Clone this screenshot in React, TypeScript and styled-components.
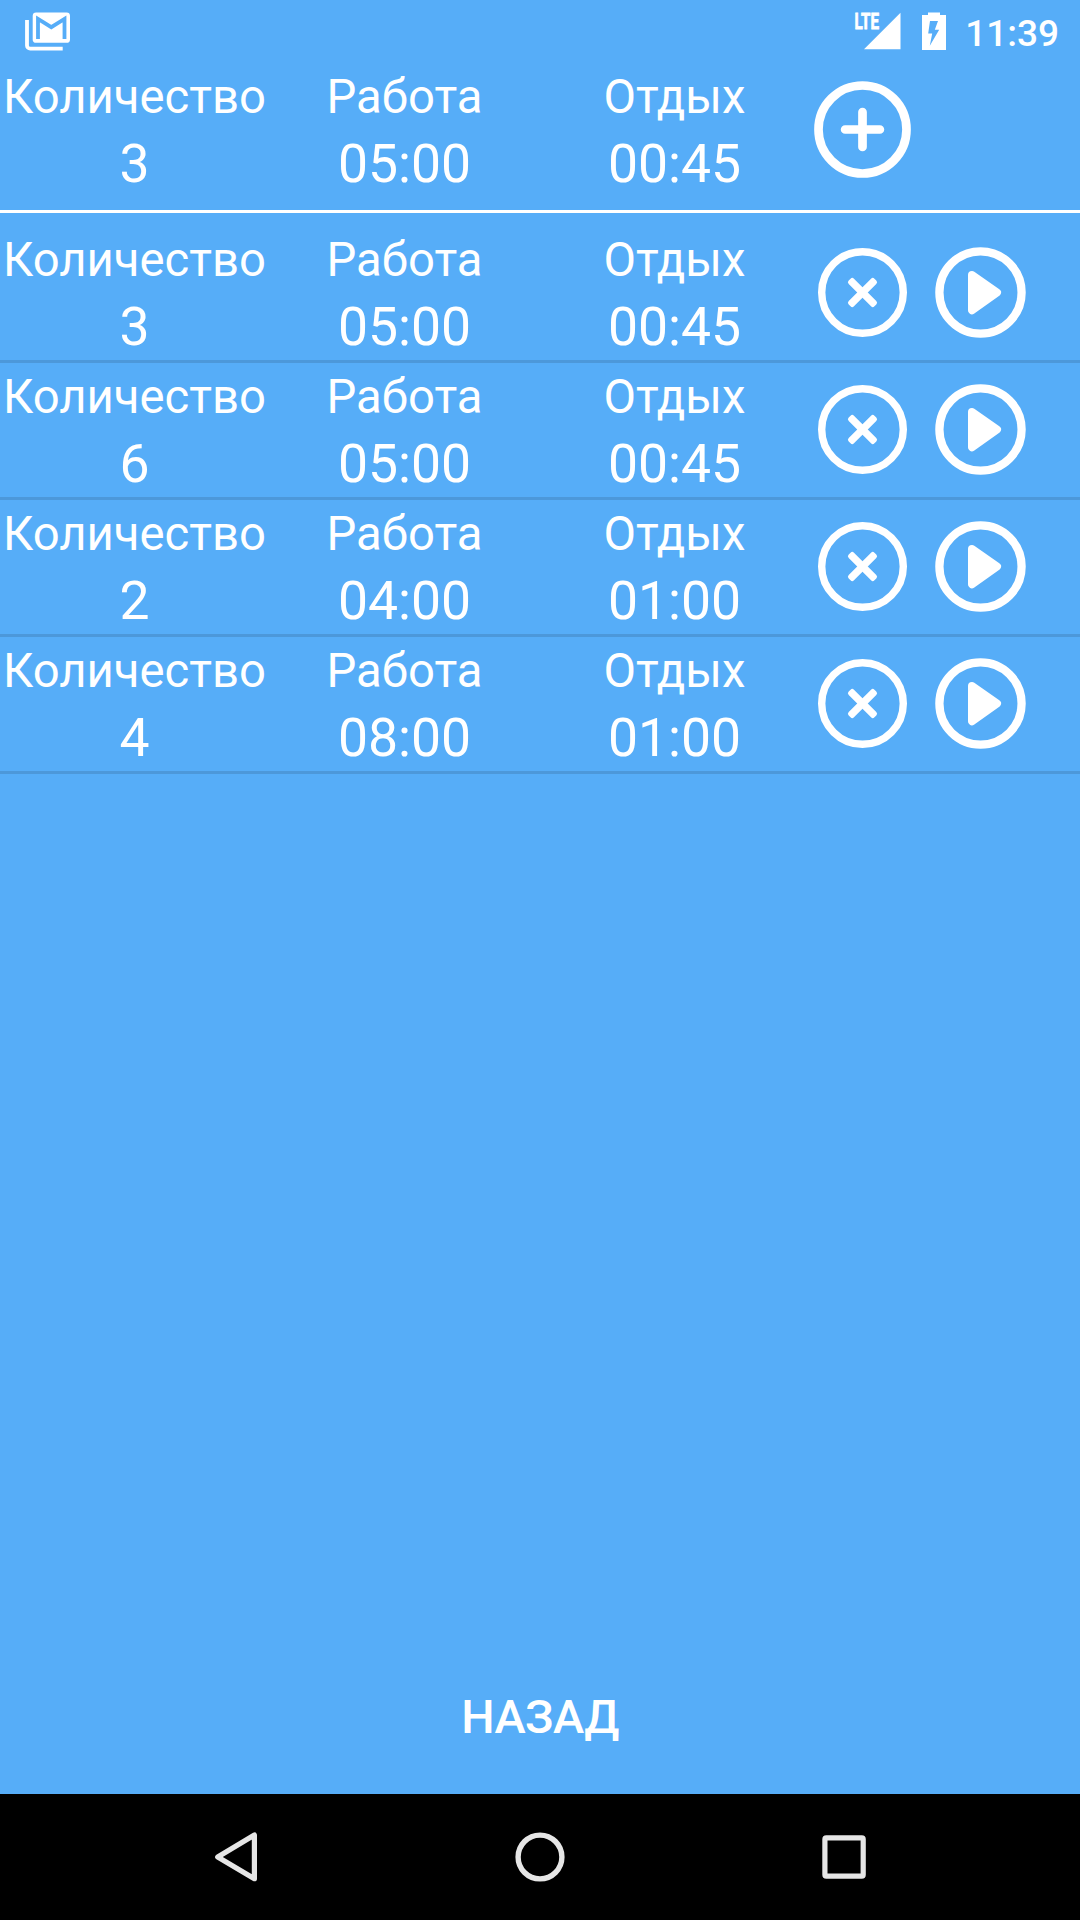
import React from "react";
import styled, { createGlobalStyle } from "styled-components";

const GlobalStyle = createGlobalStyle`
  * { box-sizing: border-box; }
  html, body { margin: 0; padding: 0; background: #56adf8; }
`;

const Screen = styled.div`
  display: flex;
  flex-direction: column;
  width: 1080px;
  height: 1920px;
  overflow: hidden;
  background: #56adf8;
  color: #fff;
  font-family: Roboto, "Noto Sans", sans-serif;
`;

const StatusBar = styled.header`
  display: flex;
  align-items: center;
  justify-content: space-between;
  flex: none;
  height: 63px;
  padding: 0 21px 0 24px;
`;

const StatusGroup = styled.div`
  display: flex;
  align-items: center;
  height: 63px;
`;

const StatusIcon = styled.svg<{ $gap?: number }>`
  display: block;
  flex: none;
  margin-right: ${(p) => p.$gap ?? 0}px;
`;

const Clock = styled.time`
  font-size: 37px;
  font-weight: 500;
  line-height: 43px;
  margin-top: 3px;
`;

const Row = styled.div`
  display: grid;
  grid-template-columns: repeat(4, 270px);
  height: 134px;
  flex: none;
`;

const Cell = styled.div`
  display: flex;
  flex-direction: column;
  align-items: center;
  padding-right: 1px;
  white-space: nowrap;
`;

const Label = styled.span`
  font-size: 47.25px;
  line-height: 56px;
  padding-top: 6px;
`;

const Value = styled.span`
  font-size: 53.5px;
  line-height: 64px;
  padding-top: 7px;
`;

const Actions = styled.div`
  display: flex;
  gap: 13px;
  align-items: center;
`;

const IconButton = styled.button`
  display: block;
  width: 105px;
  height: 105px;
  padding: 0;
  border: 0;
  background: none;
  color: inherit;
  svg { display: block; }
`;

const Composer = styled.section`
  flex: none;
  padding-bottom: 13px;
  border-bottom: 3px solid #fff;
`;

const List = styled.main`
  flex: 1;
  padding-top: 13px;
`;

const Item = styled.div`
  border-bottom: 3px solid #4c98da;
`;

const BackButton = styled.button`
  align-self: center;
  flex: none;
  height: 126px;
  margin-bottom: 14px;
  padding: 0 40px;
  border: 0;
  background: none;
  color: inherit;
  font: 500 47px/56px Roboto, "Noto Sans", sans-serif;
  letter-spacing: -0.5px;
`;

const NavBar = styled.nav`
  flex: none;
  display: flex;
  justify-content: center;
  align-items: center;
  gap: 198px;
  height: 126px;
  background: #000;
`;

const PlusIcon = () => (
  <svg width="105" height="105" viewBox="0 0 105 105" fill="none" stroke="currentColor">
    <circle cx="52.5" cy="51.5" r="44" strokeWidth="8.7" />
    <path d="M52.5 34.1v34.8M35.1 51.5h34.8" strokeWidth="8.7" strokeLinecap="round" />
  </svg>
);

const RemoveIcon = () => (
  <svg width="105" height="105" viewBox="0 0 105 105" fill="none" stroke="currentColor">
    <circle cx="52.5" cy="51.5" r="40.8" strokeWidth="7.4" />
    <g fill="currentColor" stroke="none" transform="rotate(45 52.5 51.5)">
      <rect x="48.8" y="33.3" width="7.4" height="36.4" rx="2.4" />
      <rect x="34.3" y="47.8" width="36.4" height="7.4" rx="2.4" />
    </g>
  </svg>
);

const PlayIcon = () => (
  <svg width="105" height="105" viewBox="0 0 105 105" fill="none" stroke="currentColor">
    <circle cx="52.5" cy="51.5" r="41.1" strokeWidth="8.3" />
    <path d="M44 33.9L69 51.5L44 69.3z" fill="currentColor" strokeWidth="8" strokeLinejoin="round" />
  </svg>
);

const MailIcon = () => (
  <StatusIcon width="48" height="48" viewBox="24 8 48 48" fill="none">
    <path d="M27 20v25.5a3.2 3.2 0 0 0 3.2 3.2H62.7" stroke="#fff" strokeWidth="3.8" />
    <rect x="32.7" y="12.6" width="37.3" height="30.2" rx="3.4" fill="#fff" />
    <path d="M38 39V18.9L51.3 27.2L64.5 18.9V39" stroke="#56adf8" strokeWidth="3.8" />
  </StatusIcon>
);

const SignalIcon = () => (
  <StatusIcon width="48" height="48" viewBox="854 8 48 48" $gap={18}>
    <path d="M864 49.3L900.5 12.8V49.3z" fill="#fff" />
    <text x="854.6" y="28.8" fill="#fff" stroke="#fff" strokeWidth="0.8" fontSize="21.5" fontWeight="700" fontFamily="Roboto, sans-serif" textLength="24.4" lengthAdjust="spacingAndGlyphs">LTE</text>
  </StatusIcon>
);

const BatteryIcon = () => (
  <StatusIcon width="28" height="48" viewBox="920 8 28 48" $gap={17}>
    <path fillRule="evenodd" fill="#fff" d="M928 12.4h12v2.5h6v35h-24v-35h6zM930 20.9L928.2 33.6h4L929.8 45.8L939.2 29.8h-4.4L938 20.9z" />
  </StatusIcon>
);

type Interval = { count: number; work: string; rest: string };

const INTERVALS: Interval[] = [
  { count: 3, work: "05:00", rest: "00:45" },
  { count: 6, work: "05:00", rest: "00:45" },
  { count: 2, work: "04:00", rest: "01:00" },
  { count: 4, work: "08:00", rest: "01:00" },
];

const IntervalRow = ({ interval, children }: { interval: Interval; children: React.ReactNode }) => (
  <Row>
    <Cell><Label>Количество</Label><Value>{interval.count}</Value></Cell>
    <Cell><Label>Работа</Label><Value>{interval.work}</Value></Cell>
    <Cell><Label>Отдых</Label><Value>{interval.rest}</Value></Cell>
    <Actions>{children}</Actions>
  </Row>
);

export default function App() {
  return (
    <Screen>
      <GlobalStyle />
      <StatusBar>
        <StatusGroup><MailIcon /></StatusGroup>
        <StatusGroup>
          <SignalIcon />
          <BatteryIcon />
          <Clock>11:39</Clock>
        </StatusGroup>
      </StatusBar>
      <Composer>
        <IntervalRow interval={INTERVALS[0]}>
          <IconButton><PlusIcon /></IconButton>
        </IntervalRow>
      </Composer>
      <List>
        {INTERVALS.map((interval, i) => (
          <Item key={i}>
            <IntervalRow interval={interval}>
              <IconButton><RemoveIcon /></IconButton>
              <IconButton><PlayIcon /></IconButton>
            </IntervalRow>
          </Item>
        ))}
      </List>
      <BackButton>НАЗАД</BackButton>
      <NavBar>
        <svg width="106" height="106" viewBox="0 0 106 106" fill="none" stroke="#e6e6e6" strokeWidth="5.2" strokeLinejoin="round">
          <path d="M71.4 31.1V74.7L34.7 53.1z" />
        </svg>
        <svg width="106" height="106" viewBox="0 0 106 106" fill="none" stroke="#e6e6e6" strokeWidth="5.4">
          <circle cx="53" cy="53" r="21.9" />
        </svg>
        <svg width="106" height="106" viewBox="0 0 106 106" fill="none" stroke="#e6e6e6" strokeWidth="5.2">
          <rect x="33.9" y="33.9" width="38.3" height="38.3" rx="1.4" />
        </svg>
      </NavBar>
    </Screen>
  );
}
